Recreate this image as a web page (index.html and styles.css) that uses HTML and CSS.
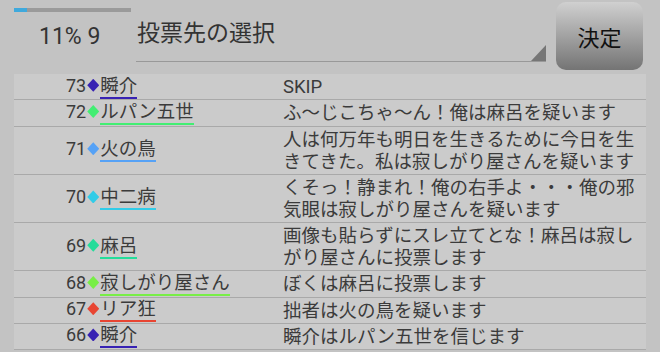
FILE: index.html
```html
<!DOCTYPE html>
<html lang="ja">
<head>
    <meta charset="UTF-8">
    <meta name="viewport" content="width=device-width, initial-scale=1.0">
    <title>投票先の選択</title>
    <link rel="stylesheet" href="styles.css">
</head>
<body>
    <div class="screen">
        <div class="header">
            <div class="progress-box">
                <div class="progress"><div class="progress-fill" style="width: 11%"></div></div>
                <div class="counter">11% 9</div>
            </div>
            <div class="spinner">投票先の選択</div>
            <button class="decide">決定</button>
        </div>
        <div class="log">
            <div class="row">
                <div class="who"><span class="line"><span class="num">73</span><span class="mark p-shunsuke"></span><span class="name p-shunsuke">瞬介</span></span></div>
                <div class="msg">SKIP</div>
            </div>
            <div class="row">
                <div class="who"><span class="line"><span class="num">72</span><span class="mark p-lupin"></span><span class="name p-lupin">ルパン五世</span></span></div>
                <div class="msg">ふ～じこちゃ～ん！俺は麻呂を疑います</div>
            </div>
            <div class="row">
                <div class="who"><span class="line"><span class="num">71</span><span class="mark p-hinotori"></span><span class="name p-hinotori">火の鳥</span></span></div>
                <div class="msg">人は何万年も明日を生きるために今日を生きてきた。私は寂しがり屋さんを疑います</div>
            </div>
            <div class="row">
                <div class="who"><span class="line"><span class="num">70</span><span class="mark p-chuni"></span><span class="name p-chuni">中二病</span></span></div>
                <div class="msg">くそっ！静まれ！俺の右手よ・・・俺の邪気眼は寂しがり屋さんを疑います</div>
            </div>
            <div class="row">
                <div class="who"><span class="line"><span class="num">69</span><span class="mark p-maro"></span><span class="name p-maro">麻呂</span></span></div>
                <div class="msg">画像も貼らずにスレ立てとな！麻呂は寂しがり屋さんに投票します</div>
            </div>
            <div class="row">
                <div class="who"><span class="line"><span class="num">68</span><span class="mark p-sabishi"></span><span class="name p-sabishi">寂しがり屋さん</span></span></div>
                <div class="msg">ぼくは麻呂に投票します</div>
            </div>
            <div class="row">
                <div class="who"><span class="line"><span class="num">67</span><span class="mark p-riakyo"></span><span class="name p-riakyo">リア狂</span></span></div>
                <div class="msg">拙者は火の鳥を疑います</div>
            </div>
            <div class="row">
                <div class="who"><span class="line"><span class="num">66</span><span class="mark p-shunsuke"></span><span class="name p-shunsuke">瞬介</span></span></div>
                <div class="msg">瞬介はルパン五世を信じます</div>
            </div>
        </div>
    </div>
</body>
</html>
```

FILE: styles.css
```css
body {
    margin: 0;
    background-color: #c3c3c3;
    font-family: Roboto, "Noto Sans CJK JP", sans-serif;
    color: #3b3b3b;
}
.screen {
    width: 660px;
    height: 352px;
    overflow: hidden;
}
.header {
    display: flex;
    height: 74px;
    padding-left: 14px;
}
.progress-box {
    width: 122px;
}
.progress {
    margin-top: 8px;
    width: 117px;
    height: 4px;
    background-color: #9a9a9a;
}
.progress-fill {
    height: 100%;
    background-color: #3fa9dc;
}
.counter {
    margin-top: 11px;
    padding-left: 25px;
    font-size: 23px;
    line-height: 28px;
    color: #333;
}
.spinner {
    position: relative;
    width: 409px;
    height: 42px;
    padding: 19px 0 0 1px;
    border-bottom: 1px solid #999;
    font-size: 23px;
    line-height: 30px;
    color: #333;
}
.spinner::after {
    content: "";
    position: absolute;
    right: 0;
    bottom: 0;
    width: 15px;
    height: 16px;
    background-color: #767676;
    clip-path: polygon(100% 0, 100% 100%, 0 100%);
}
.decide {
    margin: 2px 0 0 10px;
    width: 87px;
    height: 68px;
    border: none;
    border-radius: 10px;
    background: linear-gradient(#d0d0d0, #747474);
    font-family: "Noto Sans CJK JP", sans-serif;
    font-size: 22px;
    color: #111;
    padding: 0;
}
.log {
    margin: 0 14px;
    background-color: #cbcbcb;
}
.row {
    display: flex;
    border-bottom: 1px solid #a9a9a9;
}
.who {
    display: flex;
    align-items: center;
    width: 217px;
    padding-left: 52px;
    line-height: 22px;
}
.num {
    font-size: 18px;
}
.mark {
    display: inline-block;
    width: 12px;
    height: 13px;
    margin: 0 1px 0 1px;
    background-color: var(--c);
    clip-path: polygon(50% 0, 100% 50%, 50% 100%, 0 50%);
}
.name {
    display: inline-block;
    font-size: 18.5px;
    line-height: 22px;
    border-bottom: 2px solid var(--c);
}
.msg {
    flex: 1;
    padding: 2px 0 1.25px;
    font-size: 18.5px;
    line-height: 22px;
}
.p-shunsuke { --c: #3722b3; }
.p-lupin { --c: #42ee72; }
.p-hinotori { --c: #56a2f6; }
.p-chuni { --c: #32cce8; }
.p-maro { --c: #24dc9a; }
.p-sabishi { --c: #78ee46; }
.p-riakyo { --c: #e84532; }
```
